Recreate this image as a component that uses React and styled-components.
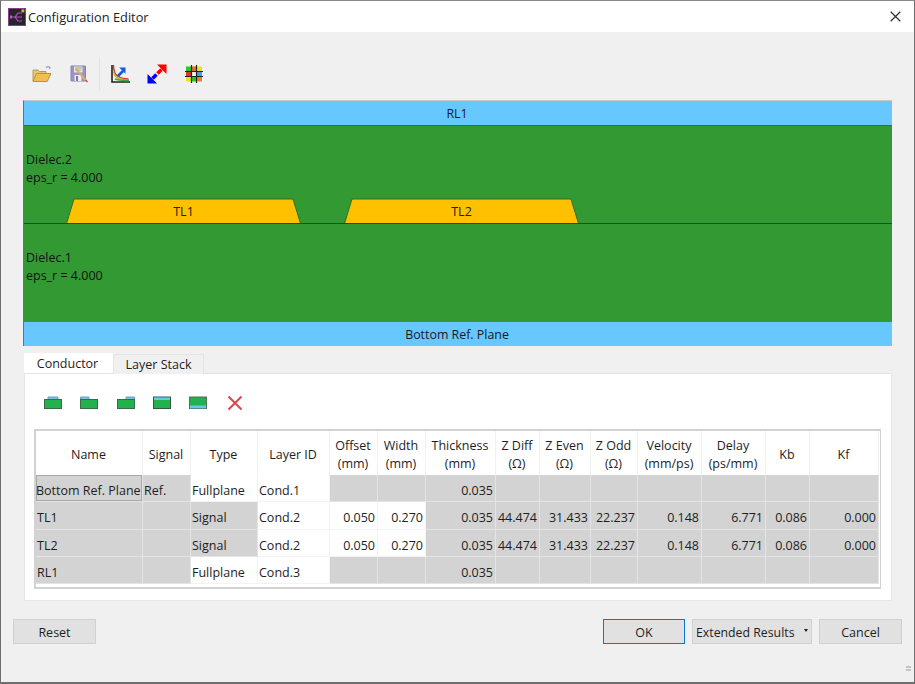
import React from "react";
import styled, { createGlobalStyle } from "styled-components";

const Global = createGlobalStyle`
  html, body { margin: 0; padding: 0; background: #f0f0f0; }
  body { font-family: "Open Sans", "Noto Sans", "Liberation Sans", sans-serif; font-size: 12.5px; color: #1e1e1e; }
  * { box-sizing: border-box; }
`;

const Win = styled.div`
  width: 915px; height: 684px; display: flex; flex-direction: column;
  border: 1px solid #6e6e6e; border-top-color: #8a8a8a; border-bottom: 2px solid #6e6e6e; background: #f0f0f0; overflow: hidden;
`;
const TitleBar = styled.div`
  height: 31px; flex: none; background: #fff; display: flex; align-items: center; padding: 0 13px 0 7px; gap: 2px;
  font-size: 12.8px; color: #222;
`;
const TitleText = styled.div` flex: 1; letter-spacing: 0; `;
const Content = styled.div`
  flex: 1; display: flex; flex-direction: column; padding: 0 22px 0 22px; position: relative; min-height: 0;
`;
const ToolBar = styled.div`
  height: 68px; flex: none; display: flex; align-items: center; padding: 15px 0 0 1px;
`;
const ToolBtn = styled.div`
  width: 36.6px; height: 24px; display: flex; align-items: center; justify-content: center;
`;
const ToolSep = styled.div`
  width: 1px; height: 34px; background: #e2e2e2; margin: 0 2px 0 2px;
`;
const Canvas = styled.div`
  width: 869px; height: 246px; flex: none; display: flex; flex-direction: column;
  border-left: 1px solid #707070; border-top: 1px solid #c8c8c8; background: #339933;
`;
const PlaneBand = styled.div`
  height: ${p => p.$h}px; flex: none; background: #66c8ff; display: flex; align-items: center; justify-content: center;
  color: #1a1a1a; padding-right: 2px; font-size: 12.4px;
`;
const Dielectric = styled.div`
  height: ${p => p.$h}px; flex: none; position: relative; background: #339933; color: #111;
  border-top: 1px solid ${p => p.$line};
  display: flex; flex-direction: column; line-height: 18px; padding: 25px 0 0 2px;
`;
const TraceBox = styled.svg`
  position: absolute; left: ${p => p.$x}px; bottom: -1px; overflow: visible;
`;
const TraceLabel = styled.text`
  font-family: "Open Sans", "Noto Sans", sans-serif; font-size: 12.5px; fill: #222;
`;
const TabRow = styled.div`
  height: 27px; flex: none; display: flex; align-items: flex-end; padding-left: 1px;
`;
const Tab = styled.div`
  height: 20px; width: ${p => p.$w}px; display: flex; align-items: center; justify-content: center;
  padding-right: ${p => p.$active ? 2 : 0}px;
  background: ${p => p.$active ? "#fff" : "#f0f0f0"};
  border: 1px solid ${p => p.$active ? "#fff" : "#e4e4e4"}; border-bottom: 0; font-size: 12.5px;
  position: relative; top: ${p => p.$active ? 0 : 1}px;
`;
const Panel = styled.div`
  width: 868px; height: 228px; flex: none; margin-left: 1px; background: #fff; border: 1px solid #e6e6e6; border-top-color: #e4e4e4;
  padding: 0 0 0 9px; display: flex; flex-direction: column;
`;
const LayerTools = styled.div`
  height: 55px; flex: none; display: flex; align-items: center; padding: 2px 0 0 1px;
`;
const LayerBtn = styled.div` width: 36.3px; height: 20px; display: flex; align-items: center; justify-content: center; `;
const Grid = styled.div`
  width: 847px; height: 160px; border: 2px solid #d2d2d2; border-right-width: 1.5px; background: #fff; display: grid;
  grid-template-columns: 107px 48px 67px 72px 48px 48px 70px 44px 51px 47px 64px 64px 44px 69px;
  grid-template-rows: 44px repeat(4, 27.3px);
  align-content: start;
`;
const Head = styled.div`
  display: flex; align-items: center; justify-content: center; text-align: center; line-height: 18.5px;
  border-right: 1px solid #f0f0f0; padding: 4px 1px 0 0; white-space: pre-line; background: #fff;
`;
const Cell = styled.div`
  display: flex; align-items: center; padding: 5px 2px 0 ${p => p.$current ? 0 : 1}px; white-space: nowrap; overflow: visible;
  justify-content: ${p => p.$right ? "flex-end" : "flex-start"};
  background: ${p => p.$white ? "#fff" : "#d3d3d3"};
  border-right: 1px solid ${p => p.$white ? "#f3f3f3" : "#e4e4e4"};
  border-bottom: 1px solid ${p => p.$white ? "#f3f3f3" : "#e4e4e4"};
  ${p => p.$current && "box-shadow: inset 0 0 0 1px #a8a8a8;"}
`;
const Footer = styled.div`
  flex: 1; display: flex; align-items: flex-start; padding: 18px 0 0 0; margin: 0 -10px; gap: 7px; position: relative;
`;
const Btn = styled.div`
  height: 25px; width: ${p => p.$w}px; display: flex; align-items: center; justify-content: ${p => p.$menu ? "flex-start" : "center"};
  padding: 1px 0 0 ${p => p.$menu ? 3 : 0}px; position: relative; font-size: ${p => p.$menu ? 12.3 : 12.5}px;
  background: #e1e1e1; border: ${p => p.$primary ? "1.5px solid #0a78d4" : "1.5px solid #d0d0d0"}; color: #1e1e1e;
`;
const Spacer = styled.div` flex: 1; `;
const MenuDot = styled.div`
  position: absolute; right: 3px; top: 9px; width: 0; height: 0;
  border-left: 2.5px solid transparent; border-right: 2.5px solid transparent; border-top: 3px solid #222;
`;
const Grip = styled.div`
  position: absolute; right: -9px; bottom: 11px; width: 5px; height: 5px;
  background: repeating-linear-gradient(to bottom, #c4c4c4 0 2px, transparent 2px 3px);
`;

const AppIcon = () => (
  <svg width="18" height="18" viewBox="0 0 18 18">
    <rect x="0.5" y="0.5" width="17" height="17" fill="#24262c" stroke="#8d3b8d" />
    <path d="M3 9h4l3-4h4M7 9h7M7 9l3 4h4" stroke="#c24bc2" strokeWidth="1.2" fill="none" />
    <path d="M3 7.500v3" stroke="#e070e0" strokeWidth="1.5" />
    <rect x="13.500" y="1.500" width="2.800" height="2.800" fill="#e8b020" />
  </svg>
);
const CloseIcon = () => (
  <svg width="11" height="11" viewBox="0 0 11 11"><path d="M0.7 0.7l9.6 9.6M10.3 0.7L0.7 10.3" stroke="#333" strokeWidth="1.3" /></svg>
);
const OpenIcon = () => (
  <svg width="22" height="20" viewBox="0 0 22 20">
    <path d="M15 3.500c1.500-1.300 3.500-1 4 .5" stroke="#9aa3a8" strokeWidth="1.2" fill="none" />
    <path d="M19.500 3.200l-.3 2.200-1.600-1.400z" fill="#8d979c" />
    <path d="M2 17V6h5l1.500 1.500H15V10" fill="#e3c476" stroke="#b99c58" strokeWidth="1" />
    <path d="M2 17.500l3.500-8H20l-3.800 8z" fill="#f0c04c" stroke="#b8923e" strokeWidth="1" />
  </svg>
);
const SaveIcon = () => (
  <svg width="20" height="20" viewBox="0 0 20 20">
    <path d="M2 2h14.500v15H2z" fill="#9d93c9" stroke="#8a82b5" />
    <rect x="5" y="2.500" width="8.500" height="6" fill="#e4e7d8" />
    <path d="M6 4h7M6 6h6" stroke="#8cb78a" strokeWidth="1" />
    <rect x="5.500" y="11" width="7" height="6" fill="#ececf2" />
    <rect x="7" y="12" width="2" height="5" fill="#7f77ab" />
    <path d="M7 5l10 11.500" stroke="#d9b06a" strokeWidth="2" />
    <path d="M16.500 16l2 2" stroke="#c85050" strokeWidth="1.600" />
  </svg>
);
const ChartIcon = () => (
  <svg width="20" height="20" viewBox="0 0 20 20">
    <path d="M2 1v17h18" stroke="#222" strokeWidth="1.600" fill="none" />
    <path d="M3.500 1c0 9 3 13.500 15 14" stroke="#e03030" strokeWidth="1.400" fill="none" />
    <path d="M3.500 8c1 5 4 7.500 15 8" stroke="#e0b020" strokeWidth="1.400" fill="none" />
    <path d="M5 15c3 1.300 8 1.500 14 1.300" stroke="#30b040" strokeWidth="1.600" fill="none" />
    <path d="M8 12l5-5" stroke="#0a5ce0" strokeWidth="2.600" />
    <path d="M15.500 3.500v6.300l-6.300-6.300z" fill="#0a5ce0" />
  </svg>
);
const ResizeIcon = () => (
  <svg width="20" height="20" viewBox="0 0 20 20">
    <path d="M10.500 9.500l4-4" stroke="#ff0000" strokeWidth="3.600" />
    <path d="M19.500 0.500v9.500L10 0.500z" fill="#ff0000" />
    <path d="M9.500 10.500l-4 4" stroke="#0000ff" strokeWidth="3.600" />
    <path d="M0.500 19.500V10L10 19.500z" fill="#0000ff" />
  </svg>
);
const GridColorIcon = () => (
  <svg width="20" height="20" viewBox="0 0 20 20">
    <rect x="2" y="2.500" width="5.500" height="5" fill="#22cc22" />
    <rect x="7.500" y="2.500" width="5" height="5" fill="#e87020" />
    <rect x="12.500" y="2.500" width="5.500" height="5" fill="#f0e020" />
    <rect x="2" y="7.500" width="5.500" height="5" fill="#e83030" />
    <rect x="7.500" y="7.500" width="5" height="5" fill="#f4f4f4" />
    <rect x="12.500" y="7.500" width="5.500" height="5" fill="#40a0e8" />
    <rect x="2" y="12.500" width="5.500" height="5" fill="#f0e020" />
    <rect x="7.500" y="12.500" width="5" height="5" fill="#22cc22" />
    <rect x="12.500" y="12.500" width="5.500" height="5" fill="#e88030" />
    <path d="M1 7.500h18M1 12.500h18M7.500 1v18M12.500 1v18" stroke="#222" strokeWidth="1.200" />
  </svg>
);
const C_G = "#22b14c", C_B = "#66c8f0";
const LayerIcon = ({ v }) => {
  const s = { stroke: "#3a6a48", strokeWidth: 1 };
  return (
    <svg width="20" height="14" viewBox="0 0 20 14">
      {v === 0 && <><path d="M5 3.500V1h10v2.500z" fill={C_B} stroke="#7a9cb0" /><rect x="1.500" y="3.500" width="17" height="9" fill={C_G} {...s} /></>}
      {v === 1 && <><path d="M1.500 3.500V1H10v2.500z" fill={C_B} stroke="#7a9cb0" /><rect x="1.500" y="3.500" width="17" height="9" fill={C_G} {...s} /></>}
      {v === 2 && <><path d="M10 3.500V1h8.500v2.500z" fill={C_B} stroke="#7a9cb0" /><rect x="1.500" y="3.500" width="17" height="9" fill={C_G} {...s} /></>}
      {v === 3 && <><rect x="1.500" y="1" width="17" height="11.500" fill={C_G} stroke="#2f5a3c" /><rect x="2" y="1.500" width="16" height="2.500" fill={C_B} /></>}
      {v === 4 && <><rect x="1.500" y="1" width="17" height="11.500" fill={C_G} stroke="#52705c" /><rect x="2" y="9.500" width="16" height="2.800" fill={C_B} /></>}
    </svg>
  );
};
const DeleteIcon = () => (
  <svg width="16" height="16" viewBox="0 0 16 16"><path d="M1.500 1.500l13 13M14.500 1.500l-13 13" stroke="#d8474c" strokeWidth="2" /></svg>
);

const Trace = ({ x, w, name }) => (
  <TraceBox $x={x} width={w} height={26} viewBox={`0 0 ${w} 26`}>
    <path d={`M0.500 25.500 L8 1 H${w - 8} L${w - 0.5} 25.500 Z`} fill="#ffc000" stroke="#2f6f2f" strokeWidth="1" />
    <TraceLabel x={w / 2} y={18} textAnchor="middle">{name}</TraceLabel>
  </TraceBox>
);

const heads = ["Name", "Signal", "Type", "Layer ID", "Offset\n(mm)", "Width\n(mm)", "Thickness\n(mm)", "Z Diff\n(Ω)", "Z Even\n(Ω)", "Z Odd\n(Ω)", "Velocity\n(mm/ps)", "Delay\n(ps/mm)", "Kb", "Kf"];
const rows = [
  ["Bottom Ref. Plane", "Ref.", "Fullplane", "Cond.1", "", "", "0.035", "", "", "", "", "", "", ""],
  ["TL1", "", "Signal", "Cond.2", "0.050", "0.270", "0.035", "44.474", "31.433", "22.237", "0.148", "6.771", "0.086", "0.000"],
  ["TL2", "", "Signal", "Cond.2", "0.050", "0.270", "0.035", "44.474", "31.433", "22.237", "0.148", "6.771", "0.086", "0.000"],
  ["RL1", "", "Fullplane", "Cond.3", "", "", "0.035", "", "", "", "", "", "", ""],
];
const isWhite = (r, c) => c === 3 || (c === 2 && (r === 0 || r === 3)) || ((c === 4 || c === 5) && (r === 1 || r === 2));

export default function App() {
  return (
    <>
      <Global />
      <Win>
        <TitleBar>
          <AppIcon />
          <TitleText>Configuration Editor</TitleText>
          <CloseIcon />
        </TitleBar>
        <Content>
          <ToolBar>
            <ToolBtn><OpenIcon /></ToolBtn>
            <ToolBtn><SaveIcon /></ToolBtn>
            <ToolSep />
            <ToolBtn><ChartIcon /></ToolBtn>
            <ToolBtn><ResizeIcon /></ToolBtn>
            <ToolBtn><GridColorIcon /></ToolBtn>
          </ToolBar>
          <Canvas>
            <PlaneBand $h={24}>RL1</PlaneBand>
            <Dielectric $h={98} $line="#2a7a2a">
              <div>Dielec.2</div>
              <div>eps_r = 4.000</div>
              <Trace x={42} w={235} name="TL1" />
              <Trace x={319.5} w={235} name="TL2" />
            </Dielectric>
            <Dielectric $h={99} $line="#1f4f1f">
              <div>Dielec.1</div>
              <div>eps_r = 4.000</div>
            </Dielectric>
            <PlaneBand $h={24}>Bottom Ref. Plane</PlaneBand>
          </Canvas>
          <TabRow>
            <Tab $active $w={89}>Conductor</Tab>
            <Tab $w={91}>Layer Stack</Tab>
          </TabRow>
          <Panel>
            <LayerTools>
              {[0, 1, 2, 3, 4].map(v => <LayerBtn key={v}><LayerIcon v={v} /></LayerBtn>)}
              <LayerBtn><DeleteIcon /></LayerBtn>
            </LayerTools>
            <Grid>
              {heads.map(h => <Head key={h}>{h}</Head>)}
              {rows.map((row, r) => row.map((t, c) => (
                <Cell key={c + "-" + r} $white={isWhite(r, c)} $right={c >= 4} $current={r === 0 && c === 0}>{t}</Cell>
              )))}
            </Grid>
          </Panel>
          <Footer>
            <Btn $w={83}>Reset</Btn>
            <Spacer />
            <Btn $w={82} $primary>OK</Btn>
            <Btn $w={120} $menu>Extended Results<MenuDot /></Btn>
            <Btn $w={83}>Cancel</Btn>
            <Grip />
          </Footer>
        </Content>
      </Win>
    </>
  );
}
